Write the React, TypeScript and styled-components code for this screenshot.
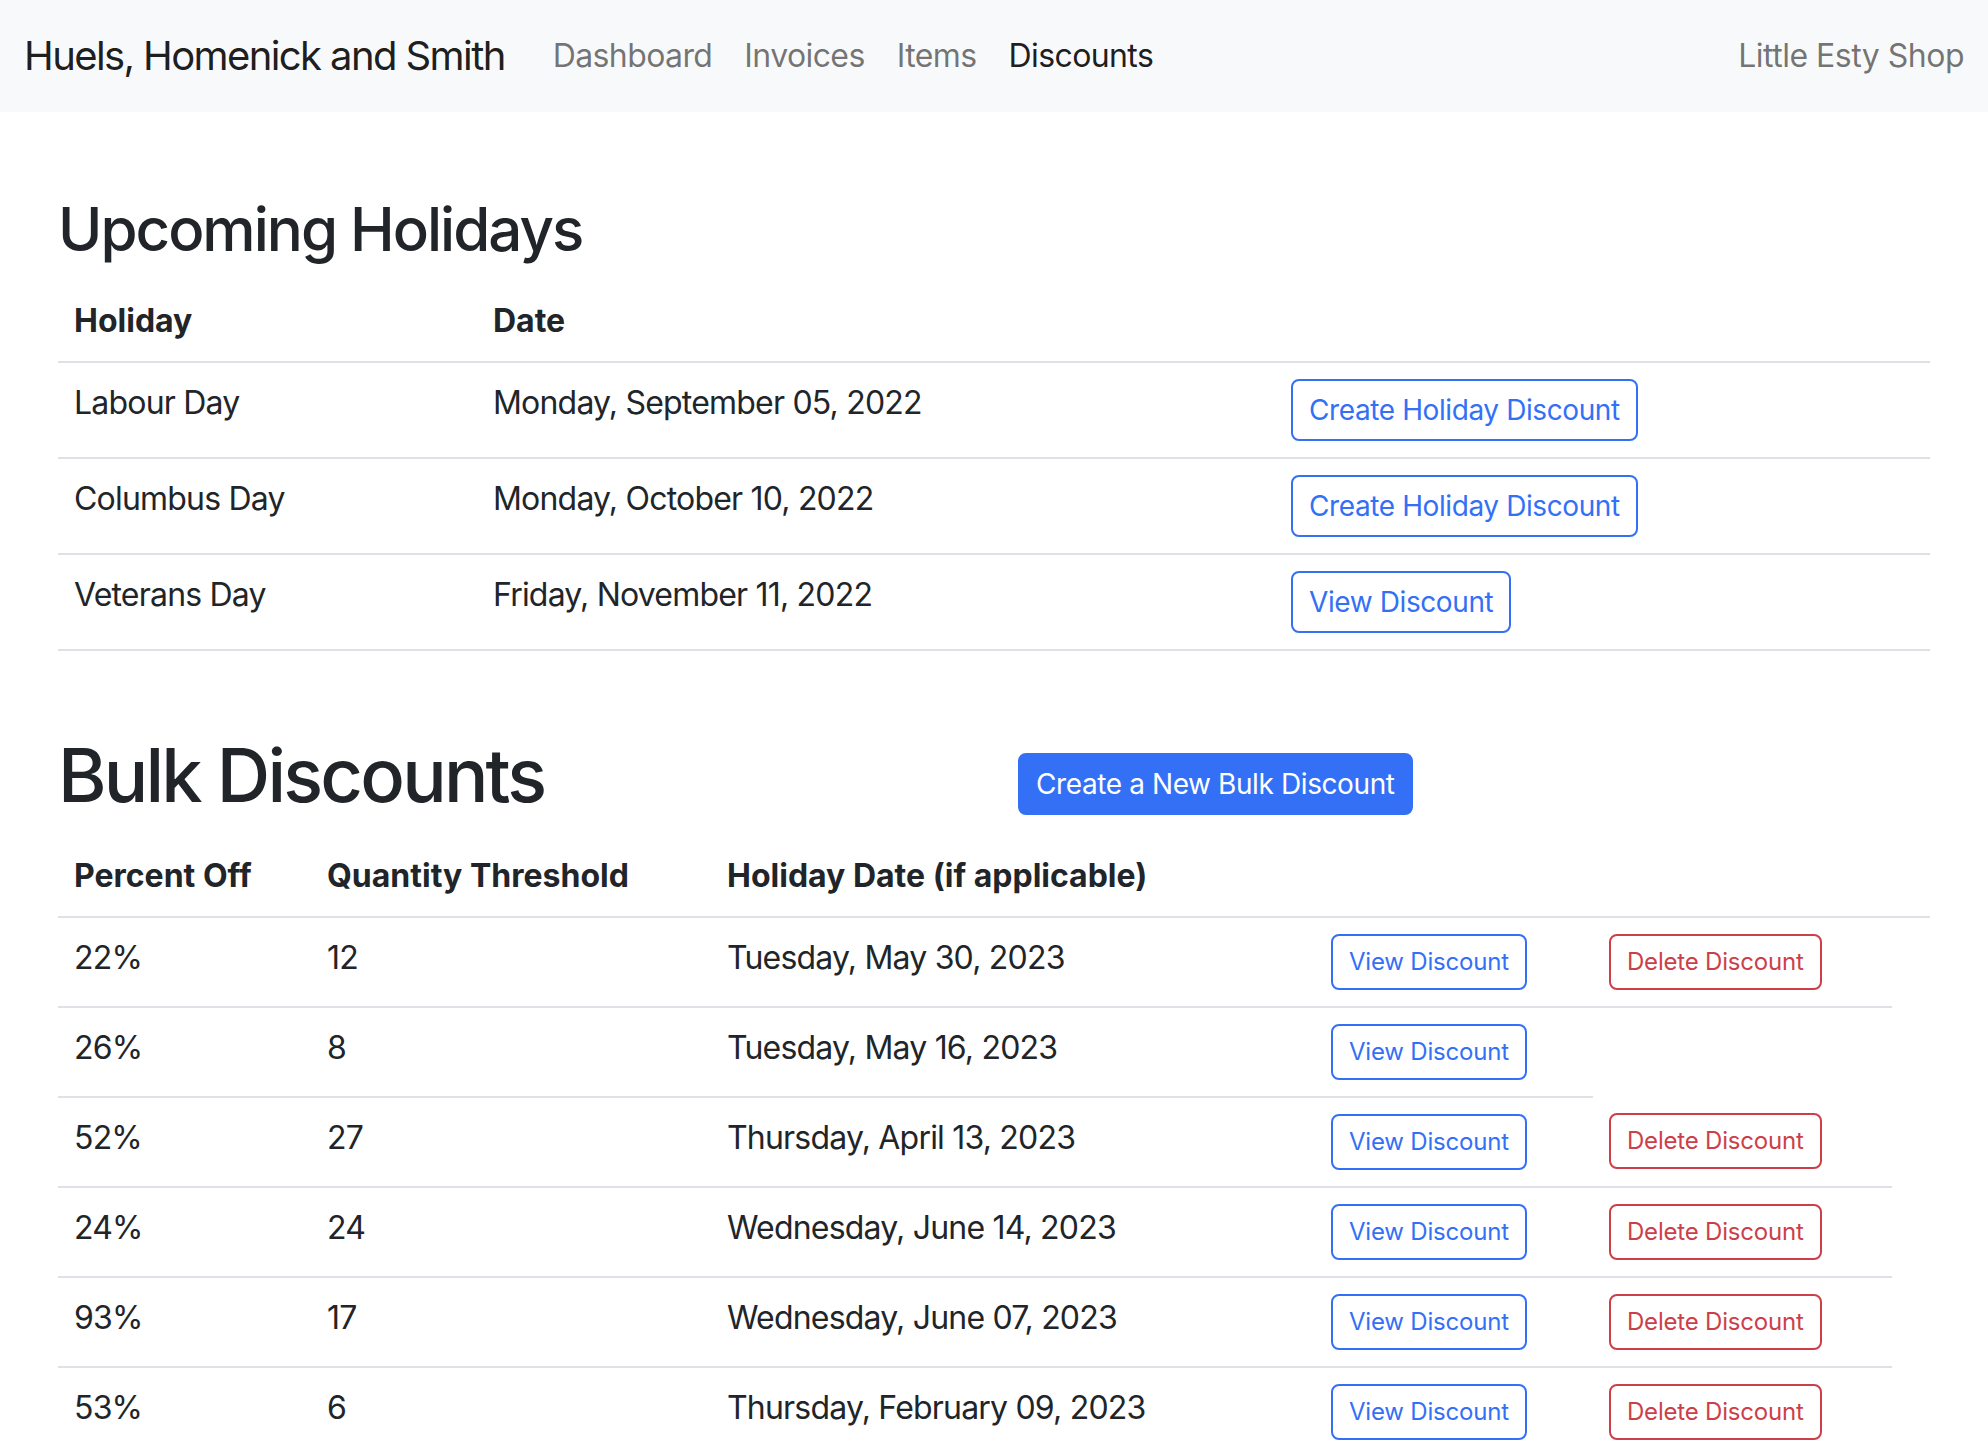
import React from "react";
import styled, { createGlobalStyle, css } from "styled-components";

const BLUE = "#3470f6";
const RED = "#cd3f48";
const LINE = "#dee2e6";
const TEXT = "#212529";

const GlobalStyle = createGlobalStyle`
  html, body { margin: 0; padding: 0; background: #fff; }
  body {
    font-family: Inter, "Noto Sans", "Liberation Sans", sans-serif;
    color: ${TEXT};
    font-size: 32px;
    line-height: 48px;
  }
  * { box-sizing: border-box; }
`;

const Navbar = styled.nav`
  display: flex;
  align-items: center;
  padding: 16px 24px;
  background: #f8f9fa;
`;

const Brand = styled.a`
  font-size: 40px;
  line-height: 60px;
  letter-spacing: -1.6px;
  padding: 10px 0;
  margin-right: 32px;
  color: rgba(0, 0, 0, 0.9);
  text-decoration: none;
  white-space: nowrap;
`;

const NavList = styled.ul`
  display: flex;
  list-style: none;
  margin: 0;
  padding: 0;
`;

const NavLink = styled.a<{ $active?: boolean }>`
  display: block;
  padding: 16px;
  font-size: 32px;
  line-height: 48px;
  letter-spacing: -0.6px;
  text-decoration: none;
  color: ${(p) => (p.$active ? "rgba(0,0,0,0.9)" : "rgba(0,0,0,0.55)")};
`;

const NavRight = styled.span`
  margin-left: auto;
  font-size: 32px;
  line-height: 48px;
  letter-spacing: -0.5px;
  padding: 16px 0;
  color: rgba(0, 0, 0, 0.55);
`;

const Container = styled.main`
  max-width: 1920px;
  margin: 0 auto;
  padding: 81px 24px 0;
`;

const SectionTitle = styled.h2`
  font-size: 60px;
  font-weight: 500;
  line-height: 1.2;
  letter-spacing: -2px;
  margin: 0 0 16px;
`;

const PageTitle = styled.h1`
  font-size: 74px;
  font-weight: 500;
  line-height: 1.2;
  letter-spacing: -2.8px;
  margin: 0 0 16px;
`;

const BulkHeader = styled.div`
  display: grid;
  grid-template-columns: 960px 1fr;
  align-items: start;
  margin-top: 80px;
`;

const HeaderAction = styled.div`
  padding-top: 22px;
`;

const Table = styled.table`
  width: 100%;
  border-collapse: collapse;
  table-layout: fixed;
  margin-bottom: 32px;
`;

const Th = styled.th`
  text-align: left;
  font-weight: 700;
  padding: 16px;
  border-bottom: 2px solid ${LINE};
  vertical-align: bottom;
  white-space: nowrap;
`;

const Td = styled.td`
  padding: 16px;
  border-bottom: 2px solid ${LINE};
  vertical-align: top;
  white-space: nowrap;
  letter-spacing: -0.8px;
`;

const Button = styled.button<{ $variant: "primary" | "outline" | "danger"; $tiny?: boolean }>`
  display: inline-block;
  font-family: inherit;
  font-weight: 400;
  font-size: ${(p) => (p.$tiny ? "24px" : "28px")};
  line-height: ${(p) => (p.$tiny ? "36px" : "42px")};
  letter-spacing: ${(p) => (p.$tiny ? "-0.2px" : "-0.4px")};
  padding: 8px 16px;
  border-radius: 8px;
  border: 2px solid ${BLUE};
  background: transparent;
  color: ${BLUE};
  white-space: nowrap;
  cursor: pointer;
  ${(p) =>
    p.$variant === "primary" &&
    css`
      background: ${BLUE};
      color: #fff;
    `}
  ${(p) =>
    p.$variant === "danger" &&
    css`
      border-color: ${RED};
      color: ${RED};
    `}
`;

const holidays = [
  { name: "Labour Day", date: "Monday, September 05, 2022", action: "Create Holiday Discount" },
  { name: "Columbus Day", date: "Monday, October 10, 2022", action: "Create Holiday Discount" },
  { name: "Veterans Day", date: "Friday, November 11, 2022", action: "View Discount" },
];

const discounts = [
  { pct: "22%", qty: "12", date: "Tuesday, May 30, 2023", del: true },
  { pct: "26%", qty: "8", date: "Tuesday, May 16, 2023", del: false },
  { pct: "52%", qty: "27", date: "Thursday, April 13, 2023", del: true },
  { pct: "24%", qty: "24", date: "Wednesday, June 14, 2023", del: true },
  { pct: "93%", qty: "17", date: "Wednesday, June 07, 2023", del: true },
  { pct: "53%", qty: "6", date: "Thursday, February 09, 2023", del: true },
];

export default function App() {
  return (
    <>
      <GlobalStyle />
      <Navbar>
        <Brand href="#">Huels, Homenick and Smith</Brand>
        <NavList>
          <li><NavLink href="#">Dashboard</NavLink></li>
          <li><NavLink href="#">Invoices</NavLink></li>
          <li><NavLink href="#">Items</NavLink></li>
          <li><NavLink href="#" $active>Discounts</NavLink></li>
        </NavList>
        <NavRight>Little Esty Shop</NavRight>
      </Navbar>
      <Container>
        <SectionTitle>Upcoming Holidays</SectionTitle>
        <Table>
          <colgroup>
            <col style={{ width: 419 }} />
            <col style={{ width: 798 }} />
            <col />
          </colgroup>
          <thead>
            <tr>
              <Th>Holiday</Th>
              <Th>Date</Th>
              <Th />
            </tr>
          </thead>
          <tbody>
            {holidays.map((h) => (
              <tr key={h.name}>
                <Td>{h.name}</Td>
                <Td>{h.date}</Td>
                <Td>
                  <Button $variant="outline">{h.action}</Button>
                </Td>
              </tr>
            ))}
          </tbody>
        </Table>

        <BulkHeader>
          <PageTitle>Bulk Discounts</PageTitle>
          <HeaderAction>
            <Button $variant="primary">Create a New Bulk Discount</Button>
          </HeaderAction>
        </BulkHeader>
        <Table>
          <colgroup>
            <col style={{ width: 253 }} />
            <col style={{ width: 400 }} />
            <col style={{ width: 604 }} />
            <col style={{ width: 278 }} />
            <col style={{ width: 299 }} />
            <col />
          </colgroup>
          <thead>
            <tr>
              <Th>Percent Off</Th>
              <Th>Quantity Threshold</Th>
              <Th>Holiday Date (if applicable)</Th>
              <Th />
              <Th />
              <Th />
            </tr>
          </thead>
          <tbody>
            {discounts.map((d) => (
              <tr key={d.pct}>
                <Td>{d.pct}</Td>
                <Td>{d.qty}</Td>
                <Td>{d.date}</Td>
                <Td>
                  <Button $variant="outline" $tiny>View Discount</Button>
                </Td>
                {d.del && (
                  <Td>
                    <Button $variant="danger" $tiny>Delete Discount</Button>
                  </Td>
                )}
              </tr>
            ))}
          </tbody>
        </Table>
      </Container>
    </>
  );
}
